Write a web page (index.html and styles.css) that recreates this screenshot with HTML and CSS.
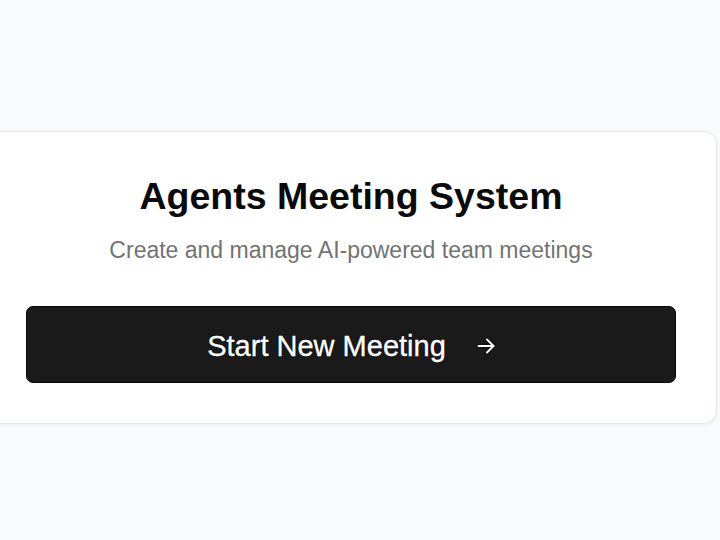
FILE: index.html
```html
<!DOCTYPE html>
<html lang="en">
<head>
<meta charset="utf-8">
<title>Agents Meeting System</title>
<link rel="stylesheet" href="styles.css">
</head>
<body>
<main class="page">
  <section class="card">
    <h1 class="title">Agents Meeting System</h1>
    <p class="subtitle">Create and manage AI-powered team meetings</p>
    <button class="start-btn" type="button">
      <span class="btn-label">Start New Meeting</span>
      <svg class="arrow" width="18" height="16" viewBox="0 0 18 16" fill="none" stroke="currentColor" stroke-width="1.9" stroke-linecap="round" stroke-linejoin="round" aria-hidden="true">
        <path d="M1.5 8h15"/>
        <path d="M10 1.5L16.5 8 10 14.5"/>
      </svg>
    </button>
  </section>
</main>
</body>
</html>
```
FILE: styles.css
```css
html, body {
  margin: 0;
  padding: 0;
}
body {
  background: #f9fafb;
  font-family: "Liberation Sans", Arial, sans-serif;
  overflow: hidden;
  width: 720px;
  height: 540px;
}
.page {
  display: flex;
  align-items: flex-start;
  padding-top: 131px;
}
.card {
  box-sizing: border-box;
  flex: 0 0 auto;
  width: 732px;
  margin-left: -15px;
  height: 293px;
  background: #ffffff;
  border: 1px solid #e5e7eb;
  border-radius: 13px;
  box-shadow: 0 1px 3px rgba(0, 0, 0, 0.06);
  padding: 43px 40px 0;
  display: flex;
  flex-direction: column;
  align-items: stretch;
  text-align: center;
}
.title {
  margin: 0;
  font-size: 37.5px;
  font-weight: 700;
  line-height: 43px;
  color: #0a0a0a;
}
.subtitle {
  margin: 19px 0 0;
  font-size: 23px;
  line-height: 26px;
  color: #737373;
}
.start-btn {
  margin-top: 43px;
  height: 77px;
  box-sizing: border-box;
  background: #1a1a1a;
  border: 1px solid #0a0a0a;
  border-radius: 7px;
  color: #ffffff;
  font-family: "Liberation Sans", Arial, sans-serif;
  font-size: 29px;
  display: flex;
  align-items: center;
  justify-content: center;
  gap: 31px;
  padding: 0;
  cursor: pointer;
}
.btn-label {
  line-height: 34px;
  margin-top: 2px;
  -webkit-text-stroke: 0.35px #ffffff;
  text-shadow: 0 0 1.5px #000000, 0 0 1px #000000;
}
.arrow {
  display: block;
  margin-top: 2px;
  filter: drop-shadow(0 0 1px #000000);
}
```
